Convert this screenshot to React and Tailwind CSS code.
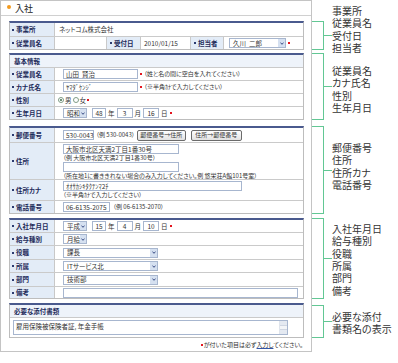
import React from "react";

const GREEN = "border-[#62c794]";

function Bullet() {
  return <span className="w-[2px] h-[2px] bg-[#2c3b70] shrink-0" />;
}

function Req() {
  return <span className="w-[2px] h-[2px] bg-[#e4141e] shrink-0" />;
}

function Label({ children, w = "w-[45px]", pl = "pl-[2px]" }) {
  return (
    <div
      className={`${w} ${pl} shrink-0 bg-[#e3ecf7] border-r border-[#c8c8c8] flex items-center gap-[2px] text-[6.5px] font-bold text-[#1e2b5a] leading-none whitespace-nowrap`}
    >
      <Bullet />
      <span>{children}</span>
    </div>
  );
}

function Chev() {
  return (
    <svg width="4" height="3" viewBox="0 0 4 3">
      <path d="M0.5 0.6 L2 2.3 L3.5 0.6" stroke="#2b3f7a" strokeWidth="0.9" fill="none" />
    </svg>
  );
}

function Box({ w, children, center = false }) {
  return (
    <div
      className={`${w} h-[10px] border border-[#a7b6cf] bg-white flex items-center ${center ? "justify-center" : "px-[2px]"} text-[6.5px] text-[#333] leading-none whitespace-nowrap shrink-0`}
    >
      {children}
    </div>
  );
}

function Sel({ w, children }) {
  return (
    <div className={`${w} h-[10px] border border-[#a7b6cf] bg-white flex items-center shrink-0`}>
      <span className="flex-1 pl-[3px] text-[6.5px] text-[#333] leading-none whitespace-nowrap">
        {children}
      </span>
      <span className="w-[7px] h-full bg-[#d5e0f0] flex items-center justify-center">
        <Chev />
      </span>
    </div>
  );
}

function Hint({ children }) {
  return <span className="text-[6px] leading-none text-[#333] whitespace-nowrap">{children}</span>;
}

function Txt({ children }) {
  return <span className="text-[6.5px] leading-none text-[#333] whitespace-nowrap">{children}</span>;
}

function Btn({ w, children }) {
  return (
    <div
      className={`${w} h-[11px] border border-[#6b6b6b] rounded-[2px] bg-gradient-to-b from-[#ffffff] to-[#e2e2e2] flex items-center justify-center text-[6px] leading-none text-[#333] whitespace-nowrap shrink-0`}
    >
      {children}
    </div>
  );
}

function Row({ h, label, children, v = "pl-[8px] gap-[2px]" }) {
  return (
    <div className={`flex ${h}`}>
      <Label>{label}</Label>
      <div className={`flex-1 flex items-center ${v}`}>{children}</div>
    </div>
  );
}

function Table({ className = "", children }) {
  return (
    <div
      className={`w-[295px] border border-t-2 border-[#bdbdbd] border-t-[#4a5a8e] flex flex-col divide-y divide-[#cacaca] bg-white ${className}`}
    >
      {children}
    </div>
  );
}

function Head({ children }) {
  return (
    <div className="h-[13px] bg-[#eef3fa] flex items-center pl-[4px] text-[6.5px] font-bold text-[#1e2b5a] leading-none">
      {children}
    </div>
  );
}

function Radio({ on }) {
  return (
    <span className="w-[6px] h-[6px] rounded-full border border-[#7f9c86] bg-white flex items-center justify-center shrink-0">
      {on && <span className="w-[2px] h-[2px] rounded-full bg-[#3d6b4a]" />}
    </span>
  );
}

function Panel() {
  return (
    <div className="w-[312px] h-[352px] shrink-0 border border-[#c4c4c4] flex flex-col bg-white">
      <div className="h-[15px] shrink-0 border-b border-[#d0d0d0] flex items-center pl-[6px] gap-[4px]">
        <span className="w-[4px] h-[4px] rounded-full bg-[#f39a1e] -mt-[2px]" />
        <span className="text-[9px] leading-none text-[#222]">入社</span>
      </div>
      <div className="pl-[8px] pt-[5px] flex flex-col">
        {/* table 1 */}
        <Table>
          <Row h="h-[14px]" label="事業所" v="pl-[4px]">
            <Txt>ネットコム株式会社</Txt>
          </Row>
          <div className="flex h-[12px]">
            <Label>従業員名</Label>
            <div className="w-[52px] border-r border-[#cacaca]" />
            <Label w="w-[34px]" pl="pl-[3px]">受付日</Label>
            <div className="w-[50px] border-r border-[#cacaca] flex items-center pl-[3px]">
              <Txt>2010/01/15</Txt>
            </div>
            <Label w="w-[33px]" pl="pl-[3px]">担当者</Label>
            <div className="flex-1 flex items-center pl-[5px] gap-[2px]">
              <Sel w="w-[57px]">久川&nbsp;&nbsp;二郎</Sel>
              <Req />
            </div>
          </div>
        </Table>

        {/* table 2 */}
        <Table className="mt-[3px]">
          <Head>基本情報</Head>
          <Row h="h-[13px]" label="従業員名">
            <Box w="w-[75px]">山田&nbsp;&nbsp;賢治</Box>
            <Req />
            <Hint>（姓と名の間に空白を入れてください）</Hint>
          </Row>
          <Row h="h-[13px]" label="カナ氏名">
            <Box w="w-[75px]">ﾔﾏﾀﾞｹﾝｼﾞ</Box>
            <Req />
            <Hint>（※半角ｶﾅで入力してください）</Hint>
          </Row>
          <Row h="h-[13px]" label="性別" v="pl-[3px] gap-[1px]">
            <Radio on />
            <Txt>男</Txt>
            <Radio />
            <Txt>女</Txt>
            <Req />
          </Row>
          <Row h="h-[12px]" label="生年月日">
            <Sel w="w-[24px]">昭和</Sel>
            <span className="w-[1px]" />
            <Box w="w-[14px]" center>48</Box>
            <Txt>年</Txt>
            <Box w="w-[16px]" center>3</Box>
            <Txt>月</Txt>
            <Box w="w-[16px]" center>16</Box>
            <Txt>日</Txt>
            <Req />
          </Row>
        </Table>

        {/* table 3 */}
        <Table className="mt-[6px]">
          <Row h="h-[15px]" label="郵便番号">
            <Box w="w-[31px]">530-0043</Box>
            <Hint>（例 530-0043）</Hint>
            <Btn w="w-[49px]">郵便番号→住所</Btn>
            <span className="w-[1px]" />
            <Btn w="w-[51px]">住所→郵便番号</Btn>
          </Row>
          <div className="flex h-[37px]">
            <Label>住所</Label>
            <div className="flex-1 flex flex-col pl-[8px] pt-[1px]">
              <Box w="w-[116px]">大阪市北区天満2丁目1番30号</Box>
              <div className="h-[7px] flex items-center">
                <Hint>（例 大阪市北区天満2丁目1番30号）</Hint>
              </div>
              <div className="mt-[1px]">
                <Box w="w-[116px]" />
              </div>
              <div className="h-[7px] flex items-center">
                <Hint>（所在地1に書ききれない場合のみ入力してください。例 悠栄荘A館101号室）</Hint>
              </div>
            </div>
          </div>
          <div className="flex h-[21px]">
            <Label>住所カナ</Label>
            <div className="flex-1 flex flex-col pl-[8px] pt-[1px]">
              <Box w="w-[179px]">ｵｵｻｶｼｷﾀｸﾃﾝﾏ2ﾁ</Box>
              <div className="h-[8px] flex items-center">
                <Hint>（※半角ｶﾅで入力してください）</Hint>
              </div>
            </div>
          </div>
          <Row h="h-[12px]" label="電話番号" v="pl-[8px] gap-[3px]">
            <Box w="w-[47px]">06-6135-2075</Box>
            <Hint>（例 06-6135-2070）</Hint>
          </Row>
        </Table>

        {/* table 4 */}
        <Table className="mt-[4px]">
          <Row h="h-[13px]" label="入社年月日">
            <Sel w="w-[24px]">平成</Sel>
            <span className="w-[1px]" />
            <Box w="w-[14px]" center>15</Box>
            <Txt>年</Txt>
            <Box w="w-[16px]" center>4</Box>
            <Txt>月</Txt>
            <Box w="w-[16px]" center>10</Box>
            <Txt>日</Txt>
            <Req />
          </Row>
          <Row h="h-[13px]" label="給与種別">
            <Sel w="w-[24px]">月給</Sel>
          </Row>
          <Row h="h-[14px]" label="役職">
            <Sel w="w-[95px]">課長</Sel>
          </Row>
          <Row h="h-[13px]" label="所属">
            <Sel w="w-[95px]">ITサービス北</Sel>
          </Row>
          <Row h="h-[14px]" label="部門">
            <Sel w="w-[95px]">技術部</Sel>
          </Row>
          <Row h="h-[11px]" label="備考">
            <Box w="w-[235px]" />
          </Row>
        </Table>

        {/* table 5 */}
        <Table className="mt-[4px]">
          <Head>必要な添付書類</Head>
          <div className="h-[19px] pl-[3px] pt-[2px]">
            <div className="w-[275px] h-[15px] border border-[#a7b6cf] bg-white flex">
              <div className="flex-1 pl-[2px] pt-[2px] text-[6.5px] leading-none text-[#333] whitespace-nowrap">
                雇用保険被保険者証, 年金手帳
              </div>
              <div className="w-[8px] h-full bg-[#f3f5f8] border-l border-[#dfe4ec] flex flex-col justify-between">
                <span className="h-[5px] bg-[#e4e9f1] border-b border-[#cfd6e2]" />
                <span className="h-[5px] bg-[#e4e9f1] border-t border-[#cfd6e2]" />
              </div>
            </div>
          </div>
        </Table>

        <div className="w-[295px] h-[13px] flex items-center justify-end pr-[1px] gap-[1px]">
          <Req />
          <span className="text-[6px] leading-none text-[#333] whitespace-nowrap">
            が付いた項目は必ず<span className="underline decoration-[#3356a8]">入力し</span>てください。
          </span>
        </div>
      </div>
    </div>
  );
}

const groups = [
  { mt: "mt-[21px]", h: "h-[29px]", t: "-mt-[16px]", lines: ["事業所", "従業員名", "受付日", "担当者"] },
  { mt: "mt-[3px]", h: "h-[67px]", t: "mt-[12px]", lines: ["従業員名", "カナ氏名", "性別", "生年月日"] },
  { mt: "mt-[6px]", h: "h-[88px]", t: "mt-[16px]", lines: ["郵便番号", "住所", "住所カナ", "電話番号"] },
  { mt: "mt-[4px]", h: "h-[81px]", t: "mt-[5px]", lines: ["入社年月日", "給与種別", "役職", "所属", "部門", "備考"] },
  { mt: "mt-[6px]", h: "h-[33px]", t: "mt-[6px]", lines: ["必要な添付", "書類名の表示"] },
];

function Notes() {
  return (
    <div className="flex-1 flex flex-col">
      {groups.map((g, i) => (
        <div key={i} className={`flex items-start shrink-0 ${g.h} ${g.mt}`}>
          <div className={`flex items-center shrink-0 ${g.h}`}>
            <div className={`w-[12px] h-full border-y border-r ${GREEN}`} />
            <div className="w-[8px] h-px bg-[#62c794]" />
          </div>
          <div className={`${g.t} flex flex-col text-[10px] text-[#333] whitespace-nowrap`}>
            {g.lines.map((l) => (
              <div key={l} className="h-[12.3px] flex items-center leading-none">
                {l}
              </div>
            ))}
          </div>
        </div>
      ))}
    </div>
  );
}

export default function App() {
  return (
    <div className="w-[398px] h-[363px] bg-white flex overflow-hidden font-['Noto_Sans_CJK_JP','Noto_Sans',sans-serif] [font-feature-settings:'palt'] text-[#333]">
      <Panel />
      <Notes />
    </div>
  );
}
